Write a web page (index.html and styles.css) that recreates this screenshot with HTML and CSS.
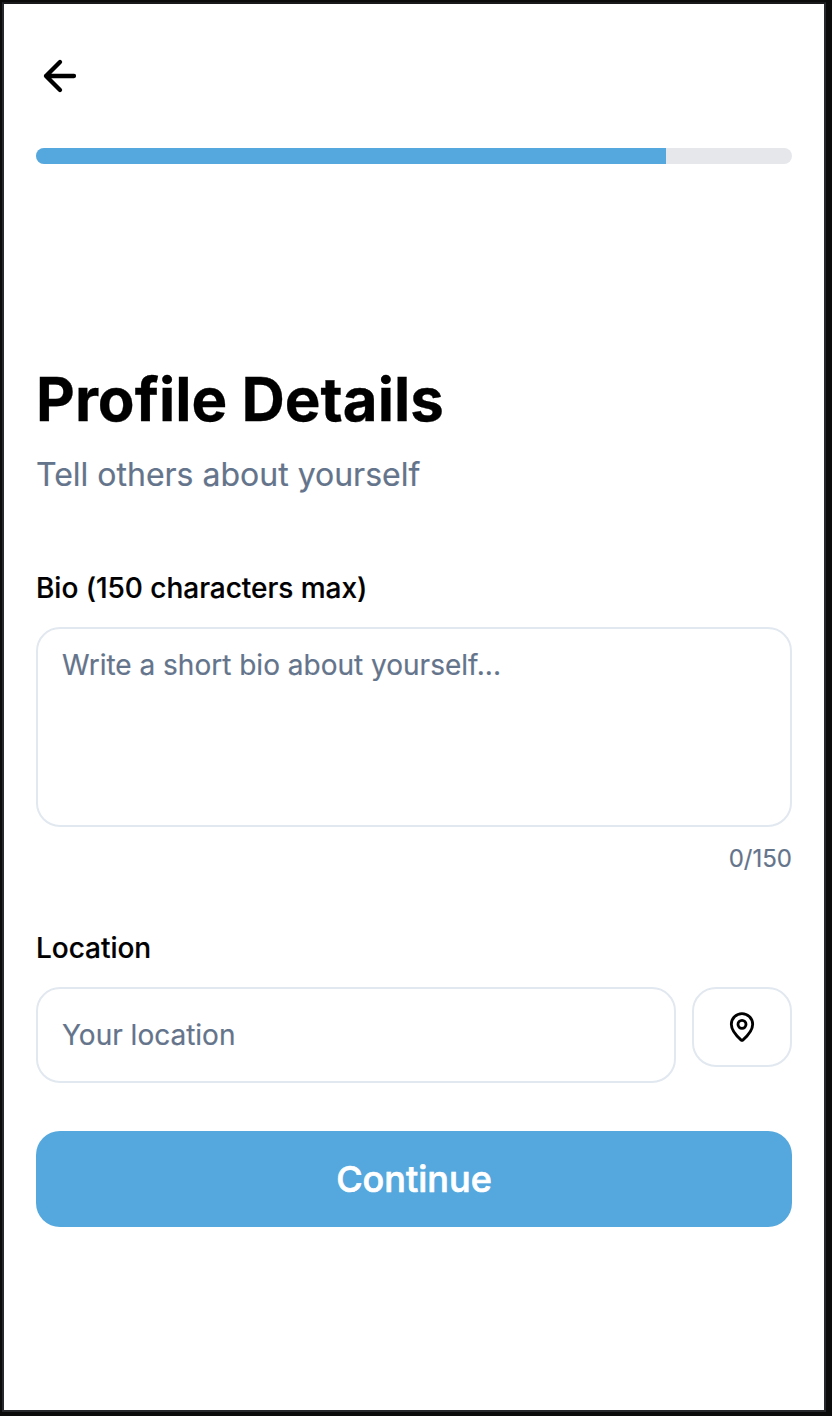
FILE: index.html
```html
<!DOCTYPE html>
<html lang="en">
<head>
<meta charset="utf-8">
<title>Profile Details</title>
<link rel="stylesheet" href="styles.css">
</head>
<body>
<main class="screen">
  <button class="back" aria-label="Back">
    <svg width="48" height="48" viewBox="0 0 24 24"><path d="m12 19-7-7 7-7M19 12H5"/></svg>
  </button>
  <div class="progress"><div class="progress-fill"></div></div>
  <h1 class="title">Profile Details</h1>
  <p class="subtitle">Tell others about yourself</p>
  <label class="label" for="bio">Bio (150 characters max)</label>
  <textarea class="field bio" id="bio" placeholder="Write a short bio about yourself..."></textarea>
  <div class="counter">0/150</div>
  <label class="label" for="location">Location</label>
  <div class="location-row">
    <input class="field location" id="location" placeholder="Your location">
    <button class="pin" aria-label="Use current location">
      <svg width="32" height="32" viewBox="0 0 24 24"><path d="M20 10c0 4.993-5.539 10.193-7.399 11.799a1 1 0 0 1-1.202 0C9.539 20.193 4 14.993 4 10a8 8 0 0 1 16 0"/><circle cx="12" cy="10" r="3"/></svg>
    </button>
  </div>
  <button class="continue">Continue</button>
</main>
</body>
</html>
```
FILE: styles.css
```css
* { box-sizing: border-box; }
body { margin: 0; background: #0b0b0c; font-family: Inter, sans-serif; color: #000; }
button { padding: 0; border: 0; background: none; font-family: inherit; }
svg { display: block; fill: none; stroke: #000; stroke-width: 2.15; stroke-linecap: round; stroke-linejoin: round; }
.screen { display: flex; flex-direction: column; width: 824px; height: 1410px; margin: 2px; padding: 48px 32px 0; border: 2px solid #27282c; border-top-color: #19191b; background: #fff; }
.back { width: 48px; height: 48px; }
.progress { height: 16px; margin-top: 48px; border-radius: 8px; background: #e5e7eb; overflow: hidden; }
.progress-fill { width: 83.333%; height: 100%; background: #55a8dd; }
.title { margin: 199px 0 0; font-size: 60px; line-height: 72px; font-weight: 700; -webkit-text-stroke: 0.3px; }
.subtitle { margin: 16px 0 0; font-size: 32px; line-height: 48px; color: #64748b; -webkit-text-stroke: 0.2px; }
.label { margin-top: 69px; font-size: 28px; line-height: 40px; font-weight: 500; letter-spacing: -0.03px; -webkit-text-stroke: 0.2px; }
.field { border: 2px solid #e2e8f0; border-radius: 24px; padding: 16px 24px; background: #fff; font: 400 28px/40px Inter, sans-serif; color: #000; outline: 0; }
.field::placeholder { color: #64748b; opacity: 1; -webkit-text-stroke: 0.2px; }
.bio { height: 200px; margin-top: 19px; resize: none; }
.counter { margin-top: 16px; font-size: 24px; line-height: 32px; text-align: right; color: #64748b; -webkit-text-stroke: 0.2px; }
.counter + .label { margin-top: 53px; }
.location-row { display: flex; align-items: flex-start; gap: 16px; margin-top: 19px; }
.location { flex: 1; min-width: 0; height: 96px; }
.pin { display: flex; align-items: center; justify-content: center; width: 100px; height: 80px; border: 2px solid #e2e8f0; border-radius: 24px; }
.continue { height: 96px; margin-top: 48px; border-radius: 24px; background: #55a8dd; color: #fff; font-size: 36px; line-height: 56px; font-weight: 500; -webkit-text-stroke: 0.7px; }
```
